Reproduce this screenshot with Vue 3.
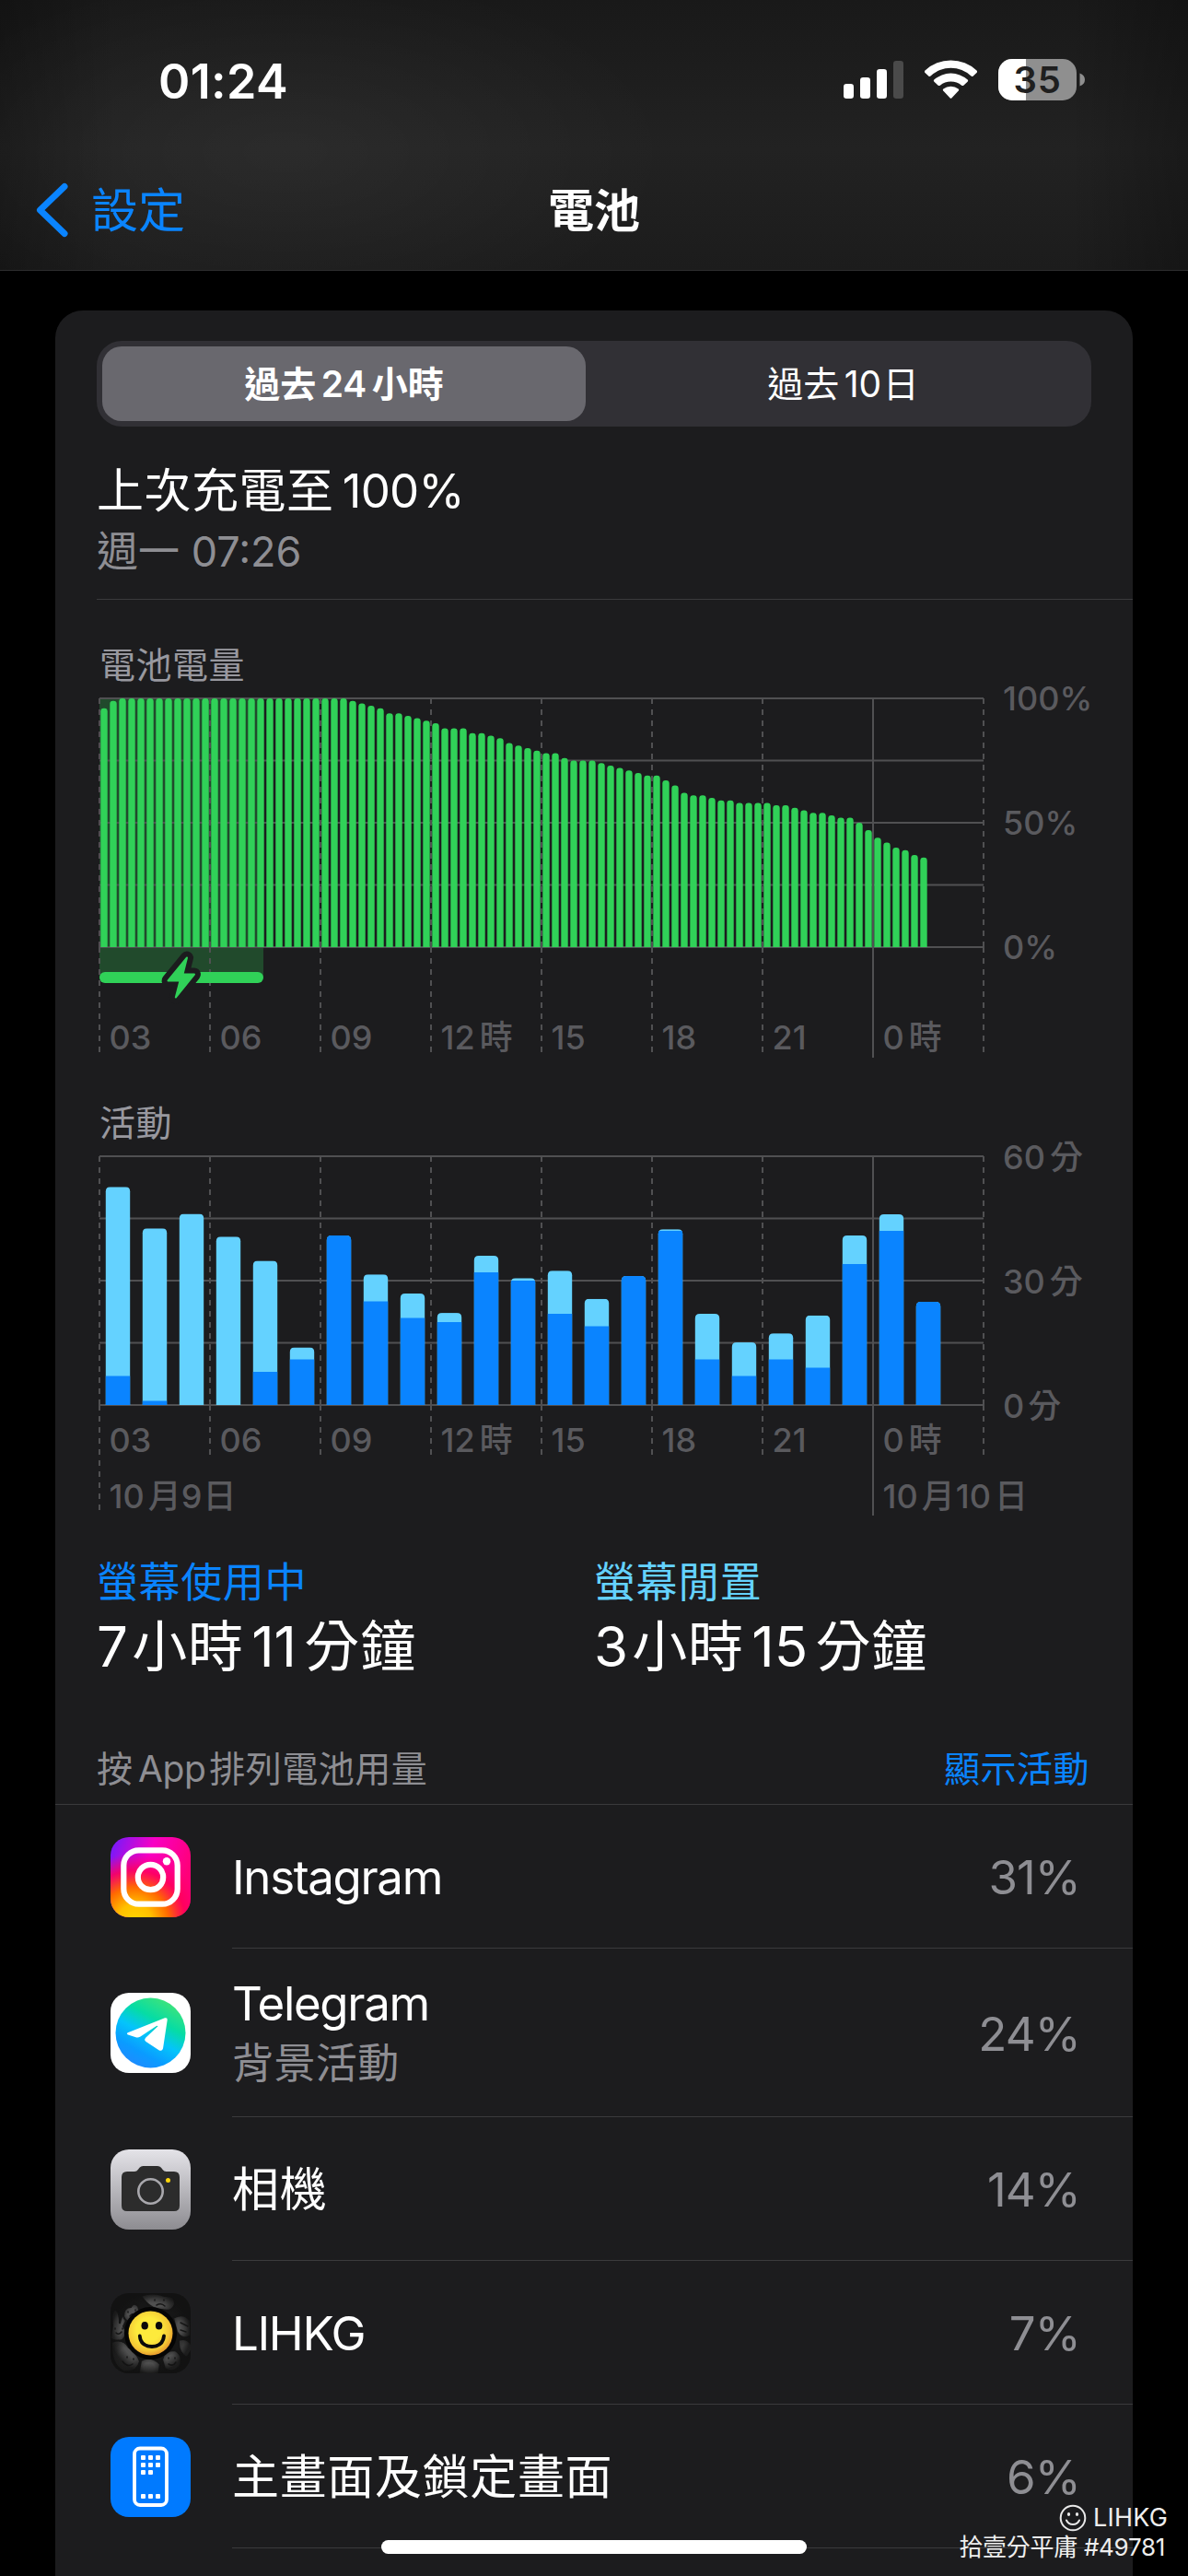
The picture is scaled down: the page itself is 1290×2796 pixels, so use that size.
<script setup>
import { ref } from 'vue';

const range = ref('day');

// Battery level, one sample every 15 minutes
const levels = [
  96, 99, ...Array(25).fill(100),
  99, 98, 97, 96, 94, 94, 93, 92, 91, 90, 88, 88, 88, 86, 86, 85, 84, 82, 81, 80,
  79, 78, 78, 76, 75, 75, 75, 74, 73, 72, 71, 70, 69, 69, 67, 65, 62, 61, 61, 60,
  59, 59, 58, 58, 58, 58, 57, 57, 56, 55, 54, 54, 53, 52, 52, 50, 47, 44, 42, 40,
  39, 37, 36,
];

// Minutes per hour: [total, screen on]
const activity = [
  [52.6, 7], [42.6, 1], [46.1, 0], [40.6, 0], [34.8, 8], [13.9, 11],
  [40.9, 40.9], [31.5, 25], [26.9, 21], [22.2, 20], [36, 32], [30.6, 30],
  [32.4, 22], [25.6, 19], [31.1, 31.1], [42.4, 42], [22, 11], [15.1, 7],
  [17.3, 11], [21.6, 9], [40.9, 34], [46, 42], [24.9, 24.9],
];

const hours = ['03', '06', '09', '12', '15', '18', '21', '0'];
const hasUnit = (h) => h === '12' || h === '0';

// Rounded top corners only
const barPath = (x, w, h, r, base) => {
  const top = base - h;
  return `M${x} ${base}V${top + r}Q${x} ${top} ${x + r} ${top}H${x + w - r}Q${x + w} ${top} ${x + w} ${top + r}V${base}Z`;
};

const apps = [
  { id: 'instagram', name: 'Instagram', usage: '31%', latin: true },
  { id: 'telegram', name: 'Telegram', note: '背景活動', usage: '24%', latin: true },
  { id: 'camera', name: '相機', usage: '14%' },
  { id: 'lihkg', name: 'LIHKG', usage: '7%', latin: true },
  { id: 'home', name: '主畫面及鎖定畫面', usage: '6%' },
];
</script>

<template>
  <div class="phone">
    <header class="top">
      <div class="status">
        <span class="clock">01:24</span>
        <svg class="status-icons" width="266" height="46" viewBox="0 0 266 46">
          <g fill="#fff">
            <rect x="0" y="27" width="11" height="16" rx="3.2" />
            <rect x="18" y="20" width="11" height="23" rx="3.2" />
            <rect x="36" y="11" width="11" height="32" rx="3.2" />
            <rect x="54" y="2" width="11" height="41" rx="3.2" fill="#4a4a4a" />
          </g>
          <g fill="#fff">
            <path d="M88.500 12.500A41 41 0 0 1 144.500 12.500Q145.600 13.700 144.500 15L140.500 18.700Q139.500 19.500 138.500 18.600A32 32 0 0 0 94.500 18.600Q93.500 19.500 92.500 18.700L88.500 15Q87.400 13.700 88.500 12.500Z" />
            <path d="M98.300 22.500A27.500 27.500 0 0 1 134.700 22.500Q135.700 23.600 134.600 24.700L130.300 28.700Q129.300 29.500 128.200 28.700A18.500 18.500 0 0 0 104.800 28.700Q103.700 29.500 102.700 28.700L98.400 24.700Q97.300 23.600 98.300 22.500Z" />
            <path d="M108.300 32.600A13.500 13.500 0 0 1 124.700 32.600Q125.800 33.500 124.800 34.600L117.500 42.300Q116.500 43.300 115.500 42.300L108.200 34.600Q107.200 33.500 108.300 32.600Z" />
          </g>
          <clipPath id="cell"><rect x="168" y="0" width="85" height="45" rx="15" /></clipPath>
          <g clip-path="url(#cell)">
            <rect x="168" y="0" width="85" height="45" fill="#8f8f8f" />
            <rect x="168" y="0" width="30" height="45" fill="#fff" />
          </g>
          <path d="M256.500 15.500Q262 17.500 262 22.500Q262 27.500 256.500 29.500Z" fill="#8f8f8f" />
          <text x="210.500" y="37" text-anchor="middle" class="cell-text">35</text>
        </svg>
      </div>
      <nav class="nav">
        <a class="back">
          <svg width="36" height="60" viewBox="0 0 36 60">
            <path d="M31 4.500L4.500 30L31 55.500" fill="none" stroke="#0a84ff" stroke-width="7" stroke-linecap="round" stroke-linejoin="round" />
          </svg>
          <span>設定</span>
        </a>
        <h1>電池</h1>
      </nav>
    </header>

    <main class="card">
      <div class="segment">
        <button :class="{ active: range === 'day' }" @click="range = 'day'">過去<i>24</i>小時</button>
        <button :class="{ active: range === 'days' }" @click="range = 'days'">過去<i class="tight">10</i>日</button>
      </div>

      <section class="last-charge">
        <p class="last-title">上次充電至<i class="last-num">100%</i></p>
        <p class="last-time">週一 <span>07:26</span></p>
      </section>

      <h2 class="chart-title">電池電量</h2>
      <svg class="chart" width="1125" height="410" viewBox="105 740 1125 410">
        <rect x="108" y="758" width="178" height="303" fill="#214a2c" />
        <g class="grid">
          <path v-for="n in 5" :key="'h' + n" :d="`M108 ${758 + (n - 1) * 67.5}H1068`" />
          <template v-for="n in 9" :key="'v' + n">
            <path v-if="n === 8" d="M948 758V1148" />
            <template v-else>
              <path class="dashed" :d="`M${108 + (n - 1) * 120} 758V1028`" />
              <path class="dashed" :d="`M${108 + (n - 1) * 120} 1028V1142`" />
            </template>
          </template>
        </g>
        <path
          v-for="(level, i) in levels"
          :key="i"
          :d="barPath(109.3 + i * 10, 7.4, level * 2.7, 3.4, 1028)"
          fill="#30d158"
        />
        <rect x="108" y="1055" width="178" height="12" rx="6" fill="#30d158" />
        <path class="bolt-edge" d="M203 1039.500L182.500 1064.500H195.500L190.800 1082.500L211 1057.500H198.500Z" />
        <path class="bolt" d="M203 1039.500L182.500 1064.500H195.500L190.800 1082.500L211 1057.500H198.500Z" />
        <g class="axis">
          <text x="1089" y="771">100%</text>
          <text x="1089" y="906">50%</text>
          <text x="1089" y="1041">0%</text>
          <text v-for="(h, i) in hours" :key="h" :x="118.5 + i * 120" y="1138.500">{{ h }}<tspan v-if="hasUnit(h)" dx="5">時</tspan></text>
        </g>
      </svg>

      <h2 class="chart-title second">活動</h2>
      <svg class="chart" width="1125" height="410" viewBox="105 1237 1125 410">
        <g class="grid">
          <path v-for="n in 5" :key="'h' + n" :d="`M108 ${1255 + (n - 1) * 67.5}H1068`" />
          <template v-for="n in 9" :key="'v' + n">
            <path v-if="n === 8" d="M948 1255V1645" />
            <template v-else>
              <path class="dashed" :d="`M${108 + (n - 1) * 120} 1255V1525`" />
              <path class="dashed" :d="`M${108 + (n - 1) * 120} 1525V${n === 1 ? 1639 : 1579}`" />
            </template>
          </template>
        </g>
        <g v-for="([total, on], i) in activity" :key="i">
          <clipPath :id="'bar' + i">
            <path :d="barPath(114.8 + i * 40, 26.400, total * 4.5, 5, 1525)" />
          </clipPath>
          <g :clip-path="`url(#bar${i})`">
            <rect :x="114 + i * 40" :y="1525 - total * 4.5" width="28" :height="total * 4.5" fill="#64d2ff" />
            <rect :x="114 + i * 40" :y="1525 - on * 4.5" width="28" :height="on * 4.5" fill="#0a84ff" />
          </g>
        </g>
        <g class="axis">
          <text x="1089" y="1268.500">60<tspan dx="5">分</tspan></text>
          <text x="1089" y="1403.500">30<tspan dx="5">分</tspan></text>
          <text x="1089" y="1538.500">0<tspan dx="4">分</tspan></text>
          <text v-for="(h, i) in hours" :key="h" :x="118.5 + i * 120" y="1575.500">{{ h }}<tspan v-if="hasUnit(h)" dx="5">時</tspan></text>
          <text x="118.500" y="1636.500">10<tspan dx="4">月</tspan><tspan dx="0">9</tspan><tspan dx="1">日</tspan></text>
          <text x="958.500" y="1636.500">10<tspan dx="4">月</tspan><tspan dx="1">10</tspan><tspan dx="4">日</tspan></text>
        </g>
      </svg>

      <section class="summary">
        <div>
          <p class="label on">螢幕使用中</p>
          <p class="duration"><i>7</i>小時<i>11</i>分鐘</p>
        </div>
        <div>
          <p class="label idle">螢幕閒置</p>
          <p class="duration"><i>3</i>小時<i>15</i>分鐘</p>
        </div>
      </section>

      <div class="list-head">
        <span>按<i>App</i>排列電池用量</span>
        <a>顯示活動</a>
      </div>

      <ul class="apps">
        <li v-for="app in apps" :key="app.id" :class="{ tall: app.note }">
          <svg v-if="app.id === 'instagram'" class="icon" viewBox="0 0 87 87">
            <defs>
              <linearGradient id="igBase" x1="0" y1="0" x2="1" y2="0.350">
                <stop offset="0" stop-color="#6a1cff" />
                <stop offset="0.500" stop-color="#f800c4" />
                <stop offset="1" stop-color="#ff0078" />
              </linearGradient>
              <radialGradient id="igWarm" cx="0.300" cy="1.050" r="0.850">
                <stop offset="0" stop-color="#ffd600" />
                <stop offset="0.250" stop-color="#ffc000" />
                <stop offset="0.500" stop-color="#ff6a00" />
                <stop offset="0.750" stop-color="#ff0058" stop-opacity="0.850" />
                <stop offset="1" stop-color="#ff0069" stop-opacity="0" />
              </radialGradient>
            </defs>
            <rect width="87" height="87" rx="20" fill="url(#igBase)" />
            <rect width="87" height="87" rx="20" fill="url(#igWarm)" />
            <g fill="none" stroke="#fff" stroke-width="6.200">
              <rect x="14.300" y="14.300" width="58.400" height="58.400" rx="16.500" />
              <circle cx="43.500" cy="43.500" r="13.700" />
            </g>
            <circle cx="61" cy="26.300" r="4.200" fill="#fff" />
          </svg>

          <svg v-else-if="app.id === 'telegram'" class="icon" viewBox="0 0 87 87">
            <defs>
              <linearGradient id="tgFill" x1="0.750" y1="0.050" x2="0.250" y2="0.950">
                <stop offset="0" stop-color="#3de37c" />
                <stop offset="0.300" stop-color="#06dca4" />
                <stop offset="0.550" stop-color="#04c4fb" />
                <stop offset="0.800" stop-color="#0a9bff" />
                <stop offset="1" stop-color="#1e8cff" />
              </linearGradient>
            </defs>
            <rect width="87" height="87" rx="20" fill="#fff" />
            <circle cx="43.500" cy="43.500" r="38" fill="url(#tgFill)" />
            <path d="M18.800 43.300L59 27.300Q62 26.500 61.700 29.500L57 60.500Q56 64 52.500 62.300L38.500 53Q36 51 38.200 48.700L51.500 36.200Q51 35.200 49.500 36.200L32.500 47.500Q30 49 27.500 48.300L19 45.600Q17 44.400 18.800 43.300Z" fill="#fff" />
          </svg>

          <svg v-else-if="app.id === 'camera'" class="icon" viewBox="0 0 87 87">
            <defs>
              <linearGradient id="camFill" x1="0" y1="0" x2="0" y2="1">
                <stop offset="0" stop-color="#e4e3e8" />
                <stop offset="1" stop-color="#8d8c91" />
              </linearGradient>
            </defs>
            <rect width="87" height="87" rx="20" fill="url(#camFill)" />
            <path d="M18 24H26Q28.500 24 30 21.800L31.500 19.800Q33 18 35.500 18H51Q53.500 18 55 19.800L56.500 21.800Q58 24 60.500 24H69Q75 24 75 30V61Q75 67 69 67H18Q12 67 12 61V30Q12 24 18 24Z" fill="#2c2c2c" />
            <circle cx="43.500" cy="45.500" r="13.200" fill="none" stroke="#a9a8ad" stroke-width="2.600" />
            <circle cx="62.500" cy="33.500" r="2.500" fill="#ffd60a" />
          </svg>

          <svg v-else-if="app.id === 'lihkg'" class="icon" viewBox="0 0 87 87">
            <defs>
              <radialGradient id="lgBack">
                <stop offset="0.500" stop-color="#505050" />
                <stop offset="1" stop-color="#343434" />
              </radialGradient>
              <radialGradient id="lgShade">
                <stop offset="0.750" stop-color="#111" stop-opacity="0" />
                <stop offset="1" stop-color="#111" stop-opacity="0.800" />
              </radialGradient>
              <radialGradient id="lgFace" cx="0.450" cy="0.420" r="0.600">
                <stop offset="0.450" stop-color="#fdea3c" />
                <stop offset="0.800" stop-color="#f4c835" />
                <stop offset="1" stop-color="#e5942b" />
              </radialGradient>
              <clipPath id="lgClip"><rect width="87" height="87" rx="20" /></clipPath>
            </defs>
            <g clip-path="url(#lgClip)">
              <rect width="87" height="87" fill="#161616" />
              <g fill="url(#lgBack)" stroke="#151515" stroke-width="2">
                <path d="M2 35Q0 17 6 18Q10 20 10 33Q13 19 17 24Q18 30 14 36Q20 44 13 51Q5 54 0 49Z" />
                <path d="M14 25Q14 15 22 15Q25 9 30 14Q34 23 28 29Q17 34 14 25Z" />
                <path d="M33 3Q45 -2 59 3Q70 2 70 12Q67 21 56 18Q43 18 33 3Z" />
                <path d="M68 27Q79 20 87 30V46Q78 52 72 42Z" />
                <path d="M1 53Q14 48 20 59Q29 65 32 74Q29 87 14 85Q0 78 1 53Z" />
                <path d="M33 73Q44 67 54 77L52 90H30Z" />
                <path d="M56 72Q58 62 70 62Q79 67 76 78Q69 88 59 82Z" />
                <path d="M74 51Q84 47 90 59L83 70Q73 65 74 51Z" />
              </g>
              <g fill="none" stroke="#181818" stroke-width="1.500" stroke-linecap="round">
                <path d="M5 38V39M13 38V39M6 43Q9 46 12 42" />
                <path d="M19 20V21M27 18V19M21 25Q24 21 26 24" />
                <path d="M48 7V8M58 7V8M50 13Q55 10 59 14" />
                <path d="M18 69V70M25 71V72M13 74Q18 81 24 77" />
                <path d="M63 70V71M70 70V71M63 77Q68 80 71 75" />
                <path d="M76 32L84 36M76 40L82 42" />
              </g>
              <rect width="87" height="87" fill="url(#lgShade)" />
              <circle cx="43.500" cy="43.500" r="28.500" fill="#050505" />
              <circle cx="43.500" cy="43.500" r="24" fill="url(#lgFace)" />
              <ellipse cx="37.200" cy="35.300" rx="3.700" ry="4.300" fill="#0a0a0a" />
              <ellipse cx="52.600" cy="35.300" rx="3.700" ry="4.300" fill="#0a0a0a" />
              <path d="M31.800 46.500Q32.500 57.500 45 58Q57 57.500 58 46.500" fill="none" stroke="#0a0a0a" stroke-width="3.800" stroke-linecap="round" />
            </g>
          </svg>

          <svg v-else class="icon" viewBox="0 0 87 87">
            <rect width="87" height="87" rx="20" fill="#007aff" />
            <rect x="26" y="12.500" width="35" height="61.500" rx="6" fill="none" stroke="#fff" stroke-width="3.800" />
            <g fill="#fff">
              <template v-for="col in 3" :key="col">
                <rect v-for="y in [20, 28, 36, 62]" v-show="!(col === 3 && y === 36)" :key="y" :x="25 + col * 8" :y="y" width="5" height="5" rx="1" />
              </template>
            </g>
          </svg>

          <div class="row">
            <div class="names">
              <span class="name" :class="{ latin: app.latin }">{{ app.name }}</span>
              <span v-if="app.note" class="note">{{ app.note }}</span>
            </div>
            <span class="usage">{{ app.usage }}</span>
          </div>
        </li>
      </ul>
    </main>

    <div class="home-bar"></div>

    <div class="watermark">
      <div class="brand">
        <svg width="30" height="30" viewBox="0 0 30 30" fill="none" stroke="#e8e8e8" stroke-width="2" stroke-linecap="round">
          <circle cx="15" cy="15" r="13.300" />
          <path d="M8 17.500Q10 22 15 22Q20 22 22 17.500" />
          <path d="M10.500 10.700V11.300M19.500 10.700V11.300" stroke-width="3.200" />
        </svg>
        <span>LIHKG</span>
      </div>
      <div class="post">拾壹分平庸 #49781</div>
    </div>
  </div>
</template>

<style>
body {
  margin: 0;
  background: #000;
}
</style>

<style scoped>
.phone {
  position: relative;
  width: 1290px;
  height: 2796px;
  overflow: hidden;
  background: #000;
  color: #fff;
  font-family: Inter, "Noto Sans CJK TC", sans-serif;
}

h1, h2, p, ul {
  margin: 0;
  padding: 0;
  font-weight: 400;
}

i {
  font-style: normal;
  margin: 0 0.14em;
}

svg {
  overflow: visible;
}

.top {
  box-sizing: border-box;
  height: 294px;
  border-bottom: 1px solid #2d2d2e;
  background:
    radial-gradient(ellipse 420px 200px at 310px 165px, rgba(255, 255, 255, 0.045), transparent),
    linear-gradient(90deg, rgba(0, 0, 0, 0.25), transparent 10%, transparent 90%, rgba(0, 0, 0, 0.25)),
    linear-gradient(#191919, #222 55%, #1c1c1c);
}

.status {
  display: flex;
  justify-content: space-between;
  height: 110px;
  padding: 64px 108px 0 172px;
  box-sizing: border-box;
}

.clock {
  font-size: 52px;
  font-weight: 600;
  letter-spacing: 0.4px;
  line-height: 50px;
}

.cell-text {
  font-size: 40px;
  font-weight: 600;
  letter-spacing: 0.8px;
  fill: #1f1f1f;
}

.nav {
  display: grid;
  grid-template-columns: 1fr auto 1fr;
  align-items: center;
  height: 76px;
  margin-top: 79px;
  padding: 0 39px;
  font-size: 51px;
  line-height: 76px;
}

.back {
  display: flex;
  align-items: center;
  gap: 24px;
  color: #0a84ff;
}

.back span,
.nav h1 {
  padding-top: 2px;
}

.nav h1 {
  font-size: 50px;
  font-weight: 600;
}

.card {
  box-sizing: border-box;
  width: 1170px;
  height: 2500px;
  margin: 43px 60px 0;
  padding: 33px 0 0 45px;
  border-radius: 30px 30px 0 0;
  background: #1c1c1e;
}

.segment {
  display: flex;
  box-sizing: border-box;
  width: 1080px;
  height: 93px;
  padding: 6px;
  border-radius: 27px;
  background: #313035;
}

.segment button {
  flex: 1;
  padding: 0 0 0 16px;
  border: 0;
  border-radius: 21px;
  background: none;
  color: #fff;
  font: 400 39px/80px Inter, "Noto Sans CJK TC", sans-serif;
}

.segment button.active {
  flex: 0 0 525px;
  padding: 0;
  background: #69686e;
  font-weight: 600;
}

.segment .tight {
  margin-right: 0.04em;
}

.last-charge {
  box-sizing: border-box;
  height: 188px;
  padding-top: 36px;
  border-bottom: 1px solid #3a3a3c;
}

.last-title {
  font-size: 51px;
  letter-spacing: 0.5px;
  line-height: 68px;
}

.last-num {
  margin-left: 0.18em;
  letter-spacing: -0.8px;
}

.last-time {
  color: #8e8e93;
  font-size: 45px;
  line-height: 64px;
}

.chart-title {
  height: 89px;
  box-sizing: border-box;
  padding: 43px 0 0 3px;
  color: #98989f;
  font-size: 39px;
  letter-spacing: 0.5px;
  line-height: 56px;
}

.chart-title.second {
  height: 87px;
  padding-top: 41px;
}

.chart {
  display: block;
}

.grid path {
  fill: none;
  stroke: #505052;
  stroke-width: 2;
}

.grid .dashed {
  stroke-dasharray: 6;
}

.bolt-edge {
  fill: #1c1c1e;
  stroke: #1c1c1e;
  stroke-width: 14;
  stroke-linejoin: round;
}

.bolt {
  fill: #30d158;
  stroke: #30d158;
  stroke-width: 2;
  stroke-linejoin: round;
}

.axis {
  fill: #5a5a5e;
  font-size: 36px;
  font-weight: 500;
}

.summary {
  display: grid;
  grid-template-columns: 540px 1fr;
  height: 236px;
  padding-top: 41px;
  box-sizing: border-box;
}

.label {
  font-size: 45px;
  letter-spacing: 0.6px;
  line-height: 60px;
}

.label.on {
  color: #0a84ff;
}

.label.idle {
  color: #64d2ff;
}

.duration {
  font-size: 60px;
  letter-spacing: 0.8px;
  line-height: 78px;
}

.duration i {
  letter-spacing: 0;
}

.duration i:first-child {
  margin: 0 0.07em 0 0;
}

.list-head {
  display: flex;
  justify-content: space-between;
  box-sizing: border-box;
  height: 76px;
  margin-left: -45px;
  padding: 9px 47px 0 45px;
  border-bottom: 1px solid #3a3a3c;
  color: #8e8e93;
  font-size: 39px;
  letter-spacing: 0.5px;
  line-height: 56px;
}

.list-head i {
  margin-right: 0.1em;
  letter-spacing: -0.4px;
}

.list-head a {
  color: #0a84ff;
}

.apps {
  list-style: none;
}

.apps li {
  display: flex;
  align-items: center;
  height: 156px;
  padding-left: 15px;
}

.apps li.tall {
  height: 183px;
}

.icon {
  width: 87px;
  height: 87px;
  margin-right: 45px;
}

.row {
  flex: 1;
  display: flex;
  align-items: center;
  justify-content: space-between;
  box-sizing: border-box;
  height: 100%;
  padding: 2px 57px 0 0;
  border-bottom: 1px solid #3a3a3c;
}

.names {
  display: flex;
  flex-direction: column;
}

.name {
  font-size: 51px;
  letter-spacing: 0.65px;
  line-height: 66px;
}

.name.latin {
  letter-spacing: -1.35px;
}

.note {
  color: #8e8e93;
  font-size: 45px;
  letter-spacing: 0.4px;
  line-height: 64px;
}

.usage {
  color: #8e8e93;
  font-size: 51px;
  letter-spacing: -0.9px;
}

.home-bar {
  position: absolute;
  left: 414px;
  top: 2757px;
  width: 462px;
  height: 15px;
  border-radius: 8px;
  background: #fff;
}

.watermark {
  position: absolute;
  right: 22px;
  bottom: 15px;
  color: #eee;
  font-size: 27px;
  line-height: 32px;
  text-align: right;
}

.brand {
  display: flex;
  align-items: center;
  justify-content: flex-end;
  gap: 7px;
}

.brand span {
  letter-spacing: 0.2px;
}

.post {
  padding-right: 3px;
  font-size: 26px;
  letter-spacing: -0.3px;
}
</style>
